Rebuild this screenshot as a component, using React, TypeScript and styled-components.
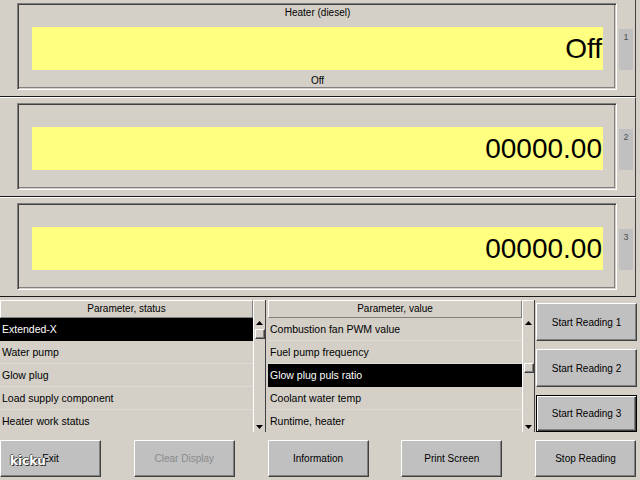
import React from "react";
import styled, { createGlobalStyle } from "styled-components";

const Global = createGlobalStyle`
  html, body { margin: 0; padding: 0; overflow: hidden; background: #d4d0c8; }
  * { box-sizing: border-box; }
`;

const Screen = styled.div`
  position: relative;
  width: 640px;
  height: 480px;
  background: #d4d0c8;
  font-family: "Liberation Sans", Arial, sans-serif;
  font-size: 10px;
  color: #000;
  display: flex;
  flex-direction: column;
  overflow: hidden;
`;

const DisplayStack = styled.div`
  display: flex;
  flex-direction: column;
`;

const DisplayPanel = styled.div<{ $first?: boolean }>`
  display: flex;
  align-items: flex-start;
  width: 636px;
  height: ${(p) => (p.$first ? 97 : 100)}px;
  padding: ${(p) => (p.$first ? 3 : 5)}px 0 0 17px;
  gap: 2px;
  border-top: ${(p) => (p.$first ? "none" : "1px solid #ffffff")};
  border-bottom: 1px solid #1a1a1a;
  border-right: 1px solid #404040;
`;

const Frame = styled.div`
  width: 600px;
  height: 87px;
  display: flex;
  flex-direction: column;
  padding: 0 13px 0 14px;
  border: 1px solid;
  border-color: #808080 #ffffff #ffffff #808080;
  box-shadow: inset 1px 1px 0 #404040, inset -1px -1px 0 #d4d0c8, inset -2px -2px 0 #808080;
`;

const FrameTitle = styled.div`
  height: 18px;
  line-height: 18px;
  text-align: center;
  font-size: 10px;
`;

const FrameFooter = styled.div`
  height: 14px;
  line-height: 14px;
  margin-top: 4px;
  text-align: center;
  font-size: 10px;
`;

const Readout = styled.div`
  height: 43px;
  margin-top: 5px;
  background: #ffff80;
  display: flex;
  align-items: center;
  justify-content: flex-end;
  padding-right: 1px;
  font-size: 28px;
  line-height: 1;
`;

const ChannelTab = styled.div`
  width: 14px;
  height: 41px;
  margin-top: 26px;
  background: #c0c0c0;
  color: #505050;
  font-size: 9px;
  text-align: center;
  padding-top: 3px;
`;

const BottomArea = styled.div`
  display: flex;
  height: 135px;
  padding-top: 3px;
`;

const ListPane = styled.div<{ $width: number; $gap: number }>`
  width: ${(p) => p.$width}px;
  margin-right: ${(p) => p.$gap}px;
  height: 132px;
  display: grid;
  grid-template-columns: 1fr 12px;
  grid-template-rows: 18px 1fr;
  border-right: 1px solid #404040;
  overflow: hidden;
`;

const ColumnHeader = styled.div`
  border: 1px solid;
  border-color: #ffffff #808080 #808080 #ffffff;
  line-height: 16px;
  text-align: center;
  font-size: 10px;
`;

const HeaderFiller = styled.div`
  border-top: 1px solid #ffffff;
  border-left: 1px solid #ffffff;
`;

const Rows = styled.div`
  display: flex;
  flex-direction: column;
  overflow: hidden;
`;

const Row = styled.div<{ $selected?: boolean }>`
  flex: 0 0 22.75px;
  line-height: 22px;
  padding-left: 2px;
  font-size: 10.5px;
  white-space: nowrap;
  background: ${(p) => (p.$selected ? "#000000" : "transparent")};
  color: ${(p) => (p.$selected ? "#ffffff" : "#000000")};
  border-bottom: 1px solid ${(p) => (p.$selected ? "#000000" : "#dedbd5")};
`;

const ScrollBar = styled.div`
  display: flex;
  flex-direction: column;
  border-left: 1px solid #ffffff;
  background: #d4d0c8;
`;

const ScrollArrow = styled.div`
  height: 10px;
  display: flex;
  align-items: center;
  justify-content: center;
`;

const ScrollTrack = styled.div`
  flex: 1;
  display: flex;
  flex-direction: column;
  align-items: center;
`;

const ScrollThumb = styled.div<{ $top: number }>`
  margin-top: ${(p) => p.$top}px;
  width: 10px;
  height: 10px;
  background: #d4d0c8;
  border: 1px solid;
  border-color: #ffffff #404040 #404040 #ffffff;
  box-shadow: inset -1px -1px 0 #808080;
`;

const SideButtons = styled.div`
  width: 101px;
  display: flex;
  flex-direction: column;
  gap: 8px;
  padding-top: 3px;
`;

const Button = styled.div<{ $focused?: boolean; $disabled?: boolean; $height: number }>`
  width: 101px;
  height: ${(p) => p.$height}px;
  display: flex;
  align-items: center;
  justify-content: center;
  background: #c0c0c0;
  font-size: 10px;
  color: ${(p) => (p.$disabled ? "#8a8a8a" : "#000000")};
  border: 1px solid;
  border-color: ${(p) => (p.$focused ? "#000000" : "#ffffff #404040 #404040 #ffffff")};
  box-shadow: ${(p) =>
    p.$focused
      ? "inset 1px 1px 0 #ffffff, inset -1px -1px 0 #404040, inset -2px -2px 0 #808080"
      : "inset -1px -1px 0 #808080"};
`;

const Footer = styled.div`
  display: flex;
  justify-content: space-between;
  width: 636px;
  margin-top: 8px;
`;

const Watermark = styled.div`
  position: absolute;
  left: 10px;
  top: 454px;
  font-family: "DejaVu Sans", sans-serif;
  font-weight: bold;
  font-size: 12px;
  color: #ffffff;
  text-shadow: 1px 1px 0 #303030, -1px 0 0 #606060, 0 -1px 0 #606060;
`;

const Arrow = ({ up }: { up?: boolean }) => (
  <svg width="7" height="4" viewBox="0 0 7 4">
    <polygon points={up ? "3.5,0 7,4 0,4" : "0,0 7,0 3.5,4"} fill="#000" />
  </svg>
);

type ListProps = {
  title: string;
  items: string[];
  selected: number;
  thumbTop: number;
  width: number;
  gap: number;
};

const ParamList = ({ title, items, selected, thumbTop, width, gap }: ListProps) => (
  <ListPane $width={width} $gap={gap}>
    <ColumnHeader>{title}</ColumnHeader>
    <HeaderFiller />
    <Rows>
      {items.map((it, i) => (
        <Row key={it} $selected={i === selected}>
          {it}
        </Row>
      ))}
    </Rows>
    <ScrollBar>
      <ScrollArrow>
        <Arrow up />
      </ScrollArrow>
      <ScrollTrack>
        <ScrollThumb $top={thumbTop} />
      </ScrollTrack>
      <ScrollArrow>
        <Arrow />
      </ScrollArrow>
    </ScrollBar>
  </ListPane>
);

const panels = [
  { n: 1, title: "Heater (diesel)", value: "Off", footer: "Off" },
  { n: 2, title: "", value: "00000.00", footer: "" },
  { n: 3, title: "", value: "00000.00", footer: "" },
];

export default function App() {
  return (
    <Screen>
      <Global />
      <DisplayStack>
        {panels.map((p, i) => (
          <DisplayPanel key={p.n} $first={i === 0}>
            <Frame>
              <FrameTitle>{p.title}</FrameTitle>
              <Readout>{p.value}</Readout>
              <FrameFooter>{p.footer}</FrameFooter>
            </Frame>
            <ChannelTab>{p.n}</ChannelTab>
          </DisplayPanel>
        ))}
      </DisplayStack>
      <BottomArea>
        <ParamList
          title="Parameter, status"
          items={["Extended-X", "Water pump", "Glow plug", "Load supply component", "Heater work status"]}
          selected={0}
          thumbTop={1}
          width={266}
          gap={2}
        />
        <ParamList
          title="Parameter, value"
          items={[
            "Combustion fan PWM value",
            "Fuel pump frequency",
            "Glow plug puls ratio",
            "Coolant water temp",
            "Runtime, heater",
          ]}
          selected={2}
          thumbTop={35}
          width={267}
          gap={1}
        />
        <SideButtons>
          <Button $height={38}>Start Reading 1</Button>
          <Button $height={38}>Start Reading 2</Button>
          <Button $height={37} $focused>
            Start Reading 3
          </Button>
        </SideButtons>
      </BottomArea>
      <Footer>
        <Button $height={37}>Exit</Button>
        <Button $height={37} $disabled>
          Clear Display
        </Button>
        <Button $height={37}>Information</Button>
        <Button $height={37}>Print Screen</Button>
        <Button $height={37}>Stop Reading</Button>
      </Footer>
      <Watermark>kicku</Watermark>
    </Screen>
  );
}
